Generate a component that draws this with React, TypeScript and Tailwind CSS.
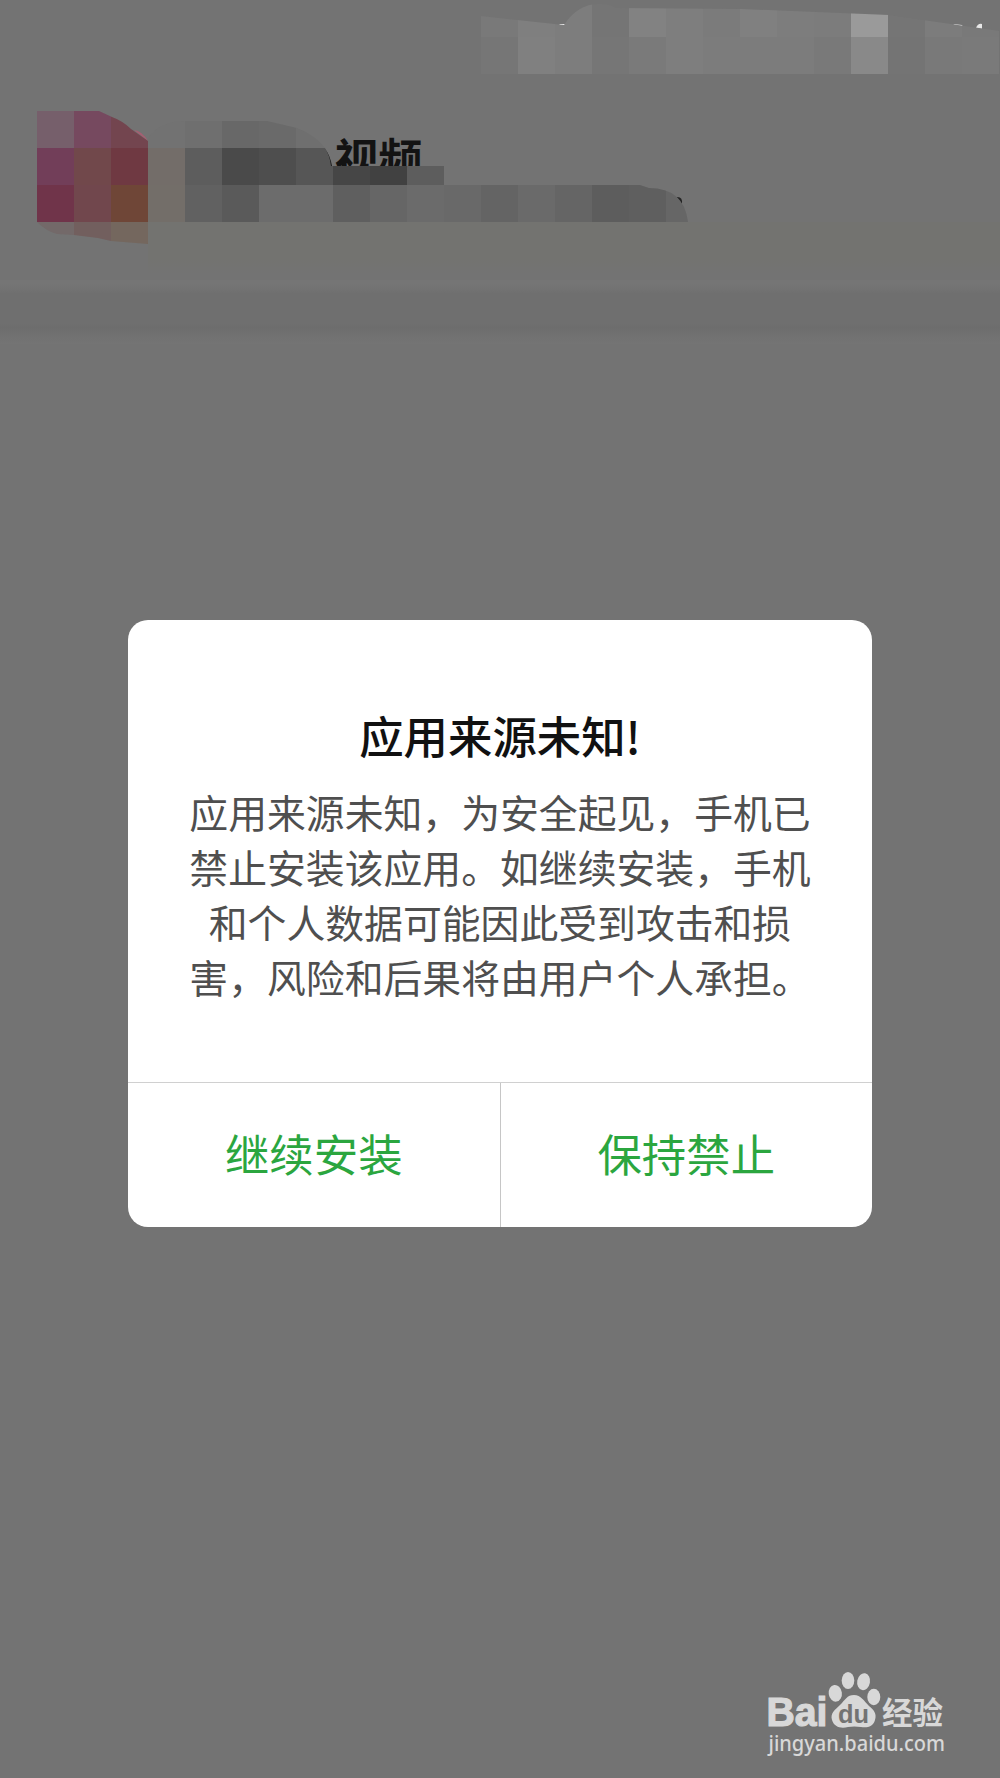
import React from "react";

type Tile = [col: number, row: number, fill: string];

const T = 37;

const statusTiles: Tile[] = [
  [13, 0, "#797979"], [14, 0, "#7f7f7f"], [15, 0, "#7d7d7d"], [16, 0, "#757575"],
  [17, 0, "#828282"], [18, 0, "#7e7e7e"], [19, 0, "#7b7b7b"], [20, 0, "#808080"],
  [21, 0, "#7d7d7d"], [22, 0, "#7c7c7c"], [23, 0, "#9a9a9a"], [24, 0, "#757575"],
  [25, 0, "#7c7c7c"], [26, 0, "#797979"],
  [13, 1, "#767676"], [14, 1, "#808080"], [15, 1, "#7d7d7d"], [16, 1, "#767676"],
  [17, 1, "#7a7a7a"], [18, 1, "#7e7e7e"], [19, 1, "#7c7c7c"], [20, 1, "#7c7c7c"],
  [21, 1, "#7c7c7c"], [22, 1, "#797979"], [23, 1, "#898989"], [24, 1, "#747474"],
  [25, 1, "#797979"], [26, 1, "#7a7a7a"],
];

const iconTiles: Tile[] = [
  [1, 3, "#765f6b"], [2, 3, "#76495f"], [3, 3, "#73454f"],
  [1, 4, "#723e59"], [2, 4, "#71484b"], [3, 4, "#6f3942"],
  [1, 5, "#70344a"], [2, 5, "#71474d"], [3, 5, "#6f4637"],
  [1, 6, "#736969"], [2, 6, "#725f5e"], [3, 6, "#74675e"],
];

const nameTiles: Tile[] = [
  [4, 3, "#727272"], [5, 3, "#6f6f6f"], [6, 3, "#686868"], [7, 3, "#6a6a6a"], [8, 3, "#6f6f6f"],
  [4, 4, "#736d69"], [5, 4, "#5d5d5d"], [6, 4, "#4a4a4a"], [7, 4, "#4e4e4e"], [8, 4, "#565656"],
  [9, 4, "#464646"], [10, 4, "#414141"], [11, 4, "#5d5d5d"],
  [4, 5, "#736e69"], [5, 5, "#616161"], [6, 5, "#5a5a5a"], [7, 5, "#6c6c6c"], [8, 5, "#6c6c6c"],
  [9, 5, "#5f5f5f"], [10, 5, "#666666"], [11, 5, "#6b6b6b"], [12, 5, "#696969"], [13, 5, "#646464"],
  [14, 5, "#6a6a6a"], [15, 5, "#656565"], [16, 5, "#5d5d5d"], [17, 5, "#5f5f5f"], [18, 5, "#666666"],
];

function Tiles({ tiles, clip }: { tiles: Tile[]; clip: string }) {
  return (
    <g clipPath={`url(#${clip})`} shapeRendering="crispEdges">
      {tiles.map(([c, r, fill]) => (
        <rect key={`${c}-${r}`} x={c * T} y={r * T} width={T} height={T} fill={fill} />
      ))}
    </g>
  );
}

function CensoredHeader() {
  return (
    <svg viewBox="0 0 1000 280" className="block h-[280px] w-full shrink-0">
      <defs>
        <clipPath id="status">
          <path d="M481 16L564 25Q578 3 601 4Q610 4 616 8L741 9L889 15L930 21L1000 31V74H481Z" />
        </clipPath>
        <clipPath id="icon">
          <path d="M37 111H99L112 117Q123 121 131 129L148 141V244L111 241L98 238L74 235L57 234Q46 231 37 222Z" />
        </clipPath>
        <clipPath id="name">
          <path d="M148 138Q160 121 185 121H267L297 128Q315 135 325 148Q330 156 331 166H444V185H640L649 188Q684 188 688 222H148Z" />
        </clipPath>
        <linearGradient id="tint" x1="0" y1="0" x2="0" y2="1">
          <stop offset="0" stopColor="#737370" />
          <stop offset="0.7" stopColor="#737370" />
          <stop offset="1" stopColor="#737373" />
        </linearGradient>
      </defs>
      <rect x="148" y="222" width="852" height="52" fill="url(#tint)" />
      <g fill="#e8e8e8">
        <path d="M559 24H566V26H561Z" />
        <path d="M953 24L962 25L963 27L956 26Z" />
        <path d="M976 28Q978 23 982 24V29Z" />
      </g>
      <text x="334.5" y="176" fontSize="44" fontWeight="700" fill="#131313">视频</text>
      <path d="M676 197Q683 196 682 204Z" fill="#222" />
      <path d="M325 149Q330 155 332 166H329Z" fill="#161616" />
      <rect x="333" y="166" width="111" height="19" fill="#464646" />
      <path d="M134 130Q142 131 148 141Z" fill="#a65f72" />
      <Tiles tiles={statusTiles} clip="status" />
      <Tiles tiles={nameTiles} clip="name" />
      <Tiles tiles={iconTiles} clip="icon" />
    </svg>
  );
}

function Watermark() {
  return (
    <svg viewBox="0 0 210 120" className="absolute left-[750px] top-[1650px] h-[120px] w-[210px]" fill="#d8d8d8">
      <text x="16.5" y="76" fontSize="40" fontWeight="700" textLength="61" lengthAdjust="spacingAndGlyphs" fontFamily="Liberation Sans, sans-serif" stroke="#d8d8d8" strokeWidth="1.2">Bai</text>
      <ellipse cx="85.3" cy="43.3" rx="6.6" ry="8.4" transform="rotate(-8 85.3 43.3)" />
      <ellipse cx="98" cy="30.5" rx="6.3" ry="8.6" />
      <ellipse cx="113.6" cy="31.7" rx="6.4" ry="8.5" transform="rotate(10 113.6 31.7)" />
      <ellipse cx="123.8" cy="47" rx="6.5" ry="8.2" />
      <path d="M104 45C111 45 114 51 119 56C124 60 127 64 125 70C123 77 117 78 111 77Q104 76 98 77C91 79 84 77 82 70C80 63 85 60 90 55C95 50 97 45 104 45Z" />
      <text x="88" y="73" fontSize="25" fontWeight="700" fill="#737373" textLength="31" lengthAdjust="spacingAndGlyphs" fontFamily="Liberation Sans, sans-serif">du</text>
      <text x="132" y="73.5" fontSize="30.5" fontWeight="700" textLength="61" lengthAdjust="spacingAndGlyphs">经验</text>
      <text x="18.5" y="101" fontSize="22" fontWeight="500" textLength="176.5" lengthAdjust="spacingAndGlyphs" fontFamily="Noto Sans, sans-serif">jingyan.baidu.com</text>
    </svg>
  );
}

export default function App() {
  return (
    <div className="relative flex h-[1778px] w-[1000px] flex-col overflow-hidden bg-[#737373] font-['Noto_Sans_CJK_SC',sans-serif]">
      <CensoredHeader />
      <div className="h-[64px] shrink-0 bg-[linear-gradient(to_bottom,#757575_0,#757575_4px,#6f6f6f_14px,#6f6f6f_44px,#6d6d6d_48px,#727272_58px,#747474_64px)]" />
      <div role="dialog" className="mx-auto mt-[276px] flex h-[607px] w-[744px] shrink-0 flex-col overflow-hidden rounded-[20px] bg-white">
        <div className="flex h-[461.5px] flex-col items-center pt-[82px] text-center">
          <h1 className="text-[44.4px] leading-[66px] font-medium text-[#111]">应用来源未知!</h1>
          <p className="mt-[15.5px] text-[38.85px] leading-[55px] whitespace-nowrap text-[#4f4f4f]">
            应用来源未知，为安全起见，手机已<br />
            禁止安装该应用。如继续安装，手机<br />
            和个人数据可能因此受到攻击和损<br />
            害，风险和后果将由用户个人承担。
          </p>
        </div>
        <div className="flex flex-1 border-t border-[#d0d0d0] text-[44.4px] text-[#2ba63f]">
          <button className="flex flex-1 items-center justify-center border-r border-[#c6c6c6] pb-[3px]">继续安装</button>
          <button className="flex flex-1 items-center justify-center pb-[3px]">保持禁止</button>
        </div>
      </div>
      <Watermark />
    </div>
  );
}
